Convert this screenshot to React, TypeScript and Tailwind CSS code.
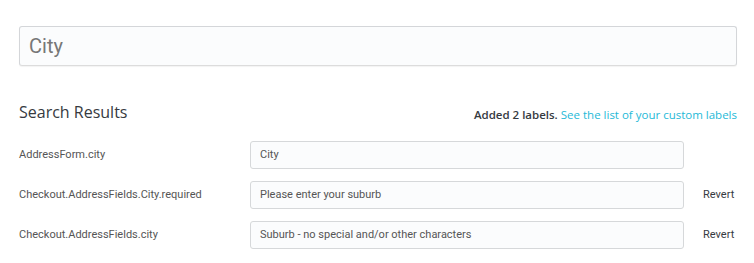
const rows = [
  { key: "AddressForm.city", value: "City", revert: false },
  { key: "Checkout.AddressFields.City.required", value: "Please enter your suburb", revert: true },
  { key: "Checkout.AddressFields.city", value: "Suburb - no special and/or other characters", revert: true },
]

export default function App() {
  return (
    <div className="w-[754px] h-[263px] bg-white pl-[19px] pr-[17px] pt-[26px] font-['Roboto',sans-serif]">
      <div className="h-[40px] flex items-center border border-[#d4d6d9] border-b-[#dcdcdc] rounded-[3px] bg-[#fbfcfd] pl-[9px] shadow-[0_1px_1px_rgba(0,0,0,0.05)]">
        <span className="text-[20px] text-[#777]">City</span>
      </div>

      <div className="mt-[34px] h-[24px] flex items-center justify-between">
        <h2 className="text-[16px] text-[#363a41] font-['Open_Sans',sans-serif]">Search Results</h2>
        <p className="text-[11.5px] font-['Open_Sans',sans-serif] pt-[6px]">
          <span className="font-semibold text-[#363a41]">Added 2 labels.</span>{" "}
          <span className="text-[#25b9d7]">See the list of your custom labels</span>
        </p>
      </div>

      <div className="mt-[17px] flex flex-col gap-[12px]">
        {rows.map((row) => (
          <div key={row.key} className="flex items-center h-[28px]">
            <div className="w-[231px] text-[11px] text-[#555]">{row.key}</div>
            <div className="w-[434px] h-[28px] flex items-center border border-[#d6d8da] rounded-[3px] bg-[#fbfcfd] pl-[9px] text-[11px] text-[#555]">
              {row.value}
            </div>
            {row.revert && <span className="ml-[19px] text-[11px] text-[#363a41]">Revert</span>}
          </div>
        ))}
      </div>
    </div>
  )
}
